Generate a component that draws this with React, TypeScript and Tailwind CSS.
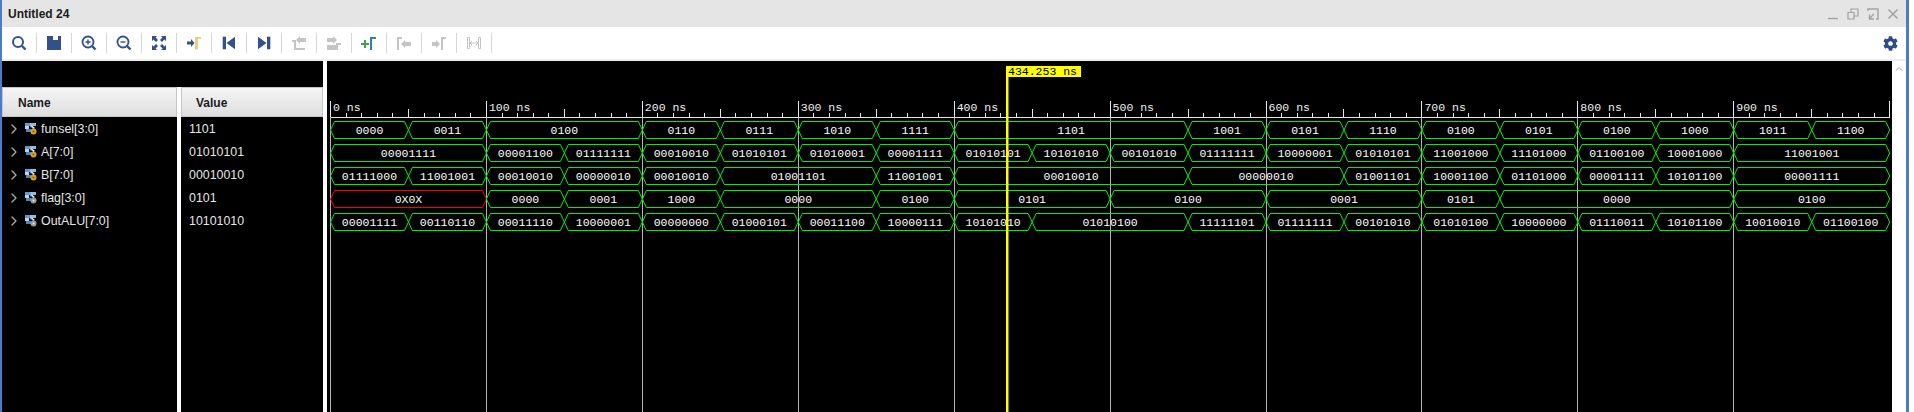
import { FaCog } from "react-icons/fa";
import { ChevronRight, ChevronUp } from "lucide-react";

type Seg = [number, number, string];

const signals: { name: string; value: string; output: boolean; segs: Seg[] }[] = [
  {
    name: "funsel[3:0]",
    value: "1101",
    output: false,
    segs: [
      [0, 50, "0000"], [50, 100, "0011"], [100, 200, "0100"], [200, 250, "0110"], [250, 300, "0111"],
      [300, 350, "1010"], [350, 400, "1111"], [400, 550, "1101"], [550, 600, "1001"], [600, 650, "0101"],
      [650, 700, "1110"], [700, 750, "0100"], [750, 800, "0101"], [800, 850, "0100"], [850, 900, "1000"],
      [900, 950, "1011"], [950, 1000, "1100"],
    ],
  },
  {
    name: "A[7:0]",
    value: "01010101",
    output: false,
    segs: [
      [0, 100, "00001111"], [100, 150, "00001100"], [150, 200, "01111111"], [200, 250, "00010010"],
      [250, 300, "01010101"], [300, 350, "01010001"], [350, 400, "00001111"], [400, 450, "01010101"],
      [450, 500, "10101010"], [500, 550, "00101010"], [550, 600, "01111111"], [600, 650, "10000001"],
      [650, 700, "01010101"], [700, 750, "11001000"], [750, 800, "11101000"], [800, 850, "01100100"],
      [850, 900, "10001000"], [900, 1000, "11001001"],
    ],
  },
  {
    name: "B[7:0]",
    value: "00010010",
    output: false,
    segs: [
      [0, 50, "01111000"], [50, 100, "11001001"], [100, 150, "00010010"], [150, 200, "00000010"],
      [200, 250, "00010010"], [250, 350, "01001101"], [350, 400, "11001001"], [400, 550, "00010010"],
      [550, 650, "00000010"], [650, 700, "01001101"], [700, 750, "10001100"], [750, 800, "01101000"],
      [800, 850, "00001111"], [850, 900, "10101100"], [900, 1000, "00001111"],
    ],
  },
  {
    name: "flag[3:0]",
    value: "0101",
    output: true,
    segs: [
      [0, 100, "0X0X"], [100, 150, "0000"], [150, 200, "0001"], [200, 250, "1000"], [250, 350, "0000"],
      [350, 400, "0100"], [400, 500, "0101"], [500, 600, "0100"], [600, 700, "0001"], [700, 750, "0101"],
      [750, 900, "0000"], [900, 1000, "0100"],
    ],
  },
  {
    name: "OutALU[7:0]",
    value: "10101010",
    output: true,
    segs: [
      [0, 50, "00001111"], [50, 100, "00110110"], [100, 150, "00011110"], [150, 200, "10000001"],
      [200, 250, "00000000"], [250, 300, "01000101"], [300, 350, "00011100"], [350, 400, "10000111"],
      [400, 450, "10101010"], [450, 550, "01010100"], [550, 600, "11111101"], [600, 650, "01111111"],
      [650, 700, "00101010"], [700, 750, "01010100"], [750, 800, "10000000"], [800, 850, "01110011"],
      [850, 900, "10101100"], [900, 950, "10010010"], [950, 1000, "01100100"],
    ],
  },
];

const navy = "#34508a";
const faded = "#c4c4c4";

const toolIcons = [
  // find
  <svg key="find" width="16" height="16" viewBox="0 0 16 16" fill="none" stroke={navy}>
    <circle cx="7" cy="7" r="5" strokeWidth="2" />
    <path d="M11 11l3.500 3.500" strokeWidth="2.400" />
  </svg>,
  // save
  <svg key="save" width="16" height="16" viewBox="0 0 16 16">
    <path d="M1 1h14v14H1z" fill={navy} />
    <path d="M7 1h5v4H7z" fill="#fff" />
    <path d="M4 1h1.500v4H4z" fill={navy} />
  </svg>,
  // zoom in
  <svg key="in" width="16" height="16" viewBox="0 0 16 16" fill="none" stroke={navy}>
    <circle cx="7" cy="7" r="5.500" strokeWidth="1.800" />
    <path d="M4.500 7h5M7 4.500v5" strokeWidth="1.400" />
    <path d="M11 11l3.500 3.500" strokeWidth="2.400" />
  </svg>,
  // zoom out
  <svg key="out" width="16" height="16" viewBox="0 0 16 16" fill="none" stroke={navy}>
    <circle cx="7" cy="7" r="5.500" strokeWidth="1.800" />
    <path d="M4.500 7h5" strokeWidth="1.400" />
    <path d="M11 11l3.500 3.500" strokeWidth="2.400" />
  </svg>,
  // zoom fit
  <svg key="fit" width="16" height="16" viewBox="0 0 16 16" fill={navy}>
    <path d="M1 1h5L4.600 2.600 7 5 5 7 2.600 4.600 1 6z" />
    <path d="M15 1v5l-1.600-1.600L11 7 9 5l2.400-2.400L10 1z" />
    <path d="M1 15v-5l1.600 1.600L5 9l2 2-2.400 2.400L6 15z" />
    <path d="M15 15h-5l1.600-1.600L9 11l2-2 2.400 2.400L15 10z" />
  </svg>,
  // go to cursor
  <svg key="cursor" width="16" height="16" viewBox="0 0 16 16">
    <path d="M1 6.500h4V4l3.500 4L5 12V9.500H1z" fill={navy} />
    <path d="M9 14.500V2h6v2h-3v10.500z" fill="#e6d083" />
  </svg>,
  // go to time 0
  <svg key="start" width="16" height="16" viewBox="0 0 16 16" fill={navy}>
    <path d="M1.700 1.700H5v12.600H1.700z" />
    <path d="M14 1.700v12.600L5.500 8z" />
  </svg>,
  // go to latest time
  <svg key="end" width="16" height="16" viewBox="0 0 16 16" fill={navy}>
    <path d="M2 1.700v12.600L10.500 8z" />
    <path d="M11 1.700h3.300v12.600H11z" />
  </svg>,
  // previous transition
  <svg key="prevt" width="16" height="16" viewBox="0 0 16 16" fill={faded}>
    <path d="M1 5h4v8h9v2H3V7H1z" />
    <path d="M5 5l4-4v2h6v4H9v2z" />
  </svg>,
  // next transition
  <svg key="nextt" width="16" height="16" viewBox="0 0 16 16" fill={faded}>
    <path d="M1 3h6V1l4 4-4 4V7H1z" />
    <path d="M1 10h9v-2h5v2h-3v5H1z" />
  </svg>,
  // add marker
  <svg key="add" width="16" height="16" viewBox="0 0 16 16">
    <path d="M3 5h2v3h3v2H5v3H3v-3H0V8h3z" fill="#3fa34d" />
    <path d="M9 15V2h6v2h-4v11z" fill="#2f7fb5" />
  </svg>,
  // previous marker
  <svg key="prevm" width="16" height="16" viewBox="0 0 16 16" fill={faded}>
    <path d="M1 15V2h5v2H3v11z" />
    <path d="M5 9l4-4v2h6v4H9v2z" />
  </svg>,
  // next marker
  <svg key="nextm" width="16" height="16" viewBox="0 0 16 16" fill={faded}>
    <path d="M1 7h4V5l4 4-4 4v-2H1z" />
    <path d="M10 15V2h5v2h-3v11z" />
  </svg>,
  // swap cursors
  <svg key="swap" width="16" height="16" viewBox="0 0 16 16" fill="none" stroke={faded}>
    <path d="M1.500 2.500v11h2v-11zM12.500 2.500v11h2v-11z" />
    <path d="M4 8h8M6 6L4 8l2 2M10 6l2 2-2 2" />
  </svg>,
];

// small bus icon next to a signal name, orange lock for inputs, grey gear for outputs
function BusIcon({ output }: { output: boolean }) {
  return (
    <svg width="12" height="12" viewBox="0 0 12 12" className="shrink-0">
      <path d="M0 0h5v3H0z" fill="#5b9ad4" />
      <path d="M0 3h4v3H0z" fill="#b4d4f0" />
      <path d="M5 0h6v3H8L6 5 5 3z" fill="#8dbce6" />
      <path d="M1 6h5v3H1z" fill="#4a86c0" />
      <path d="M6 2l4 3-2 1z" fill="#fff" />
      <circle cx="8.500" cy="8.500" r="3" fill={output ? "#9a9a9a" : "#dfa21e"} />
      <circle cx="8.500" cy="8.500" r="1" fill={output ? "#e4e4e4" : "#7d5a10"} />
    </svg>
  );
}

const nsToX = (ns: number) => 330 + ns * 1.5592;

function Ruler() {
  const ticks = [];
  for (let ns = 0; ns <= 1000; ns += 10) {
    const top = ns % 100 === 0 ? 101 : ns % 50 === 0 ? 109 : 113;
    const x = Math.round(nsToX(ns)) + 0.5;
    ticks.push(<line key={ns} x1={x} x2={x} y1={top} y2={117} stroke="#e6e6e6" />);
  }
  return (
    <g shapeRendering="crispEdges">
      {ticks}
      <line x1={330} x2={1890} y1={117.5} y2={117.5} stroke="#e6e6e6" />
    </g>
  );
}

function Bus({ segs, mid }: { segs: Seg[]; mid: number }) {
  return (
    <g>
      {segs.map(([from, to, label]) => {
        const x0 = nsToX(from) + 0.5;
        const x1 = nsToX(to) + 0.5;
        const top = mid - 8.5;
        const bot = mid + 8.5;
        const color = label.includes("X") ? "#ff0000" : "#00f000";
        return (
          <g key={from}>
            <path
              d={`M${x0} ${mid}L${x0 + 4} ${top}H${x1 - 4}L${x1} ${mid}L${x1 - 4} ${bot}H${x0 + 4}Z`}
              fill="none"
              stroke={color}
              strokeWidth="1"
            />
            <text
              x={(x0 + x1) / 2}
              y={mid + 4}
              textAnchor="middle"
              fill="#fff"
              fontSize="11.5"
              fontFamily="'Liberation Mono', monospace"
            >
              {label}
            </text>
          </g>
        );
      })}
    </g>
  );
}

function WaveView() {
  const labels = [0, 100, 200, 300, 400, 500, 600, 700, 800, 900];
  const cursor = 1007;
  return (
    <svg viewBox="327 61 1565 351" className="h-full w-full bg-black">
      <Ruler />
      {labels.map((ns) => (
        <g key={ns}>
          <line
            x1={Math.round(nsToX(ns)) + 0.5}
            x2={Math.round(nsToX(ns)) + 0.5}
            y1={117}
            y2={412}
            stroke="#b4b4b4"
            shapeRendering="crispEdges"
          />
          <text
            x={nsToX(ns) + 3}
            y={111}
            fill="#f0f0f0"
            fontSize="11.5"
            fontFamily="'Liberation Mono', monospace"
          >
            {ns} ns
          </text>
        </g>
      ))}
      {signals.map((s, i) => (
        <Bus key={s.name} segs={s.segs} mid={130 + i * 23} />
      ))}
      <rect x={cursor - 1} y={66} width={2.5} height={346} fill="#ffff00" />
      <rect x={cursor - 1} y={66} width={75} height={11} fill="#ffff00" />
      <text x={cursor + 1} y={75} fill="#000" fontSize="11.5" fontFamily="'Liberation Mono', monospace">
        434.253 ns
      </text>
    </svg>
  );
}

function HeaderCell({ label, className }: { label: string; className: string }) {
  return (
    <div
      className={`flex h-[30px] items-center border border-[#c6c6c6] bg-gradient-to-b from-[#f5f5f5] to-[#dedede] pt-[1px] text-[12px] font-bold text-[#1a1a1a] ${className}`}
    >
      {label}
    </div>
  );
}

export default function App() {
  return (
    <div className="flex h-[412px] w-[1914px] overflow-hidden bg-white font-['Liberation_Sans',sans-serif]">
      <div className="w-[2px] shrink-0 bg-[#4a7cc9]" />

      <div className="flex w-[1904px] flex-col">
        {/* Title bar */}
        <div className="flex h-[27px] items-center justify-between bg-[#e5e5e5] pl-[6px] pr-[7px]">
          <span className="text-[12px] font-bold text-[#1c1c1c]">Untitled 24</span>
          <div className="flex items-center gap-[8px] text-[#a2a2a2]">
            <svg width="12" height="12" viewBox="0 0 12 12" stroke="currentColor" fill="none" strokeWidth="1.400">
              <path d="M1 10.500h10" />
            </svg>
            <svg width="12" height="12" viewBox="0 0 12 12" stroke="currentColor" fill="none" strokeWidth="1.200">
              <path d="M1 4.500h6v6.500H1zM4 4V1h7v7H7.500" />
            </svg>
            <svg width="12" height="12" viewBox="0 0 12 12" stroke="currentColor" fill="none" strokeWidth="1.400">
              <path d="M1 3V1h10v10H9M2 11l5-5M2.500 6.500v4.500h4.500" />
            </svg>
            <svg width="12" height="12" viewBox="0 0 12 12" stroke="currentColor" fill="none" strokeWidth="1.500">
              <path d="M1.500 1.500l9 9M10.500 1.500l-9 9" />
            </svg>
          </div>
        </div>

        {/* Toolbar */}
        <div className="flex h-[32px] items-center justify-between">
          <div className="flex items-center">
            {toolIcons.map((icon) => (
              <div
                key={icon.key}
                className="flex h-[20px] w-[35px] items-center justify-center border-r border-[#d6d6d6]"
              >
                {icon}
              </div>
            ))}
          </div>
          <FaCog className="mr-[8px] text-[15px] text-[#2f4b88]" />
        </div>
        <div className="h-[2px] bg-[#eeeeee]" />

        {/* Waveform window */}
        <div className="flex min-h-0 flex-1">
          <div className="flex w-[321px] shrink-0 flex-col bg-black">
            <div className="h-[26px]" />
            <div className="flex flex-1 gap-[4px]">
              <div className="w-[175px] shrink-0">
                <HeaderCell label="Name" className="pl-[15px]" />
                {signals.map((s) => (
                  <div key={s.name} className="flex h-[23px] items-center pt-[1px] text-[12.4px] text-[#e6e6e6]">
                    <ChevronRight className="ml-[4px] mr-[3px] h-[16px] w-[16px] text-[#a8a8a8]" />
                    <BusIcon output={s.output} />
                    <span className="ml-[4px]">{s.name}</span>
                  </div>
                ))}
              </div>
              <div className="relative flex-1 before:absolute before:-left-[4px] before:top-0 before:h-full before:w-[4px] before:bg-white">
                <HeaderCell label="Value" className="pl-[14px]" />
                {signals.map((s) => (
                  <div key={s.name} className="flex h-[23px] items-center pl-[8px] pt-[1px] text-[12.4px] text-[#e6e6e6]">
                    {s.value}
                  </div>
                ))}
              </div>
            </div>
          </div>
          <div className="w-[4px] shrink-0" />
          <div className="w-[1565px] shrink-0">
            <WaveView />
          </div>
          <div className="flex flex-1 justify-center pt-[2px]">
            <ChevronUp className="h-[12px] w-[12px] text-[#a8a8a8]" />
          </div>
        </div>
      </div>

      <div className="w-[3px] shrink-0 bg-[#4a7cc9]" />
    </div>
  );
}
